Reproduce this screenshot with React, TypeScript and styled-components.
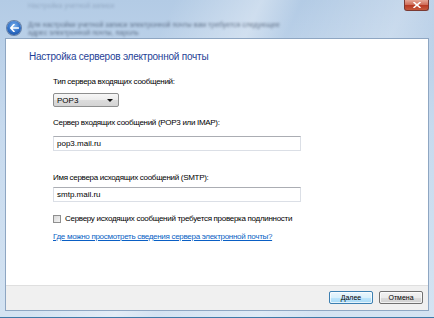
import React from 'react';
import styled, { createGlobalStyle } from 'styled-components';

const GlobalStyle = createGlobalStyle`
  html, body {
    margin: 0;
    padding: 0;
    overflow: hidden;
  }
  body {
    font-family: "Liberation Sans", Arial, sans-serif;
  }
`;

const Window = styled.div`
  position: relative;
  width: 434px;
  height: 318px;
  box-sizing: border-box;
  display: flex;
  flex-direction: column;
  padding: 0 5px 6px 5px;
  background:
    linear-gradient(115deg, rgba(255,255,255,0) 30%, rgba(255,255,255,0.35) 45%, rgba(255,255,255,0) 52%, rgba(255,255,255,0.25) 70%, rgba(255,255,255,0) 80%),
    linear-gradient(180deg, #b3cbe5 0%, #c7daee 40%, #d4e3f2 100%);
  border-bottom: 1px solid #3f7aa8;
  overflow: hidden;
`;

const TitleBar = styled.div`
  height: 38px;
  display: flex;
  align-items: flex-end;
  padding: 0 0 1px 2px;
  box-sizing: border-box;
`;

const BackButton = styled.div`
  width: 14px;
  height: 14px;
  margin-bottom: 2px;
  border-radius: 50%;
  background: radial-gradient(circle at 50% 35%, #7fb4ef 0%, #2f6fc7 55%, #123f8a 100%);
  box-shadow: 0 0 0 1px rgba(20, 50, 100, 0.5);
  display: flex;
  align-items: center;
  justify-content: center;
`;

const GhostColumn = styled.div`
  display: flex;
  flex-direction: column;
  margin-left: 7px;
  filter: blur(1px);
`;

const GhostLine = styled.div<{ $faint?: boolean; $gap?: number }>`
  font-size: 7px;
  line-height: 8px;
  white-space: nowrap;
  color: ${p => (p.$faint ? 'rgba(70, 90, 120, 0.3)' : 'rgba(35, 50, 75, 0.6)')};
  margin-bottom: ${p => p.$gap ?? 0}px;
`;

const CloseButton = styled.div`
  position: absolute;
  top: 0;
  right: 5px;
  width: 25px;
  height: 11px;
  box-sizing: border-box;
  border: 1px solid #7a3a33;
  border-top: none;
  border-radius: 0 0 3px 3px;
  background: linear-gradient(180deg, #e5a696 0%, #d0705c 45%, #b83b25 55%, #c65a3e 100%);
  display: flex;
  align-items: center;
  justify-content: center;
`;

const Content = styled.div`
  flex: 1;
  display: flex;
  flex-direction: column;
  background: #ffffff;
  border: 1px solid #8ea6c2;
`;

const Body = styled.div`
  flex: 1;
  padding: 11px 0 0 23px;
`;

const Heading = styled.div`
  font-size: 10px;
  line-height: 14px;
  letter-spacing: -0.22px;
  color: #1f3f96;
`;

const Form = styled.div`
  display: flex;
  flex-direction: column;
  align-items: flex-start;
  padding-left: 24px;
  letter-spacing: -0.3px;
`;

const Label = styled.div<{ $top: number }>`
  font-size: 8px;
  line-height: 10px;
  color: #000;
  margin-top: ${p => p.$top}px;
  white-space: nowrap;
`;

const Select = styled.div<{ $top: number }>`
  margin-top: ${p => p.$top}px;
  width: 66px;
  height: 14px;
  box-sizing: border-box;
  border: 1px solid #8e8f8f;
  border-radius: 2px;
  background: linear-gradient(180deg, #f7f7f7 0%, #ececec 50%, #dcdcdc 51%, #d4d4d4 100%);
  display: flex;
  align-items: center;
  justify-content: space-between;
  padding: 0 5px 0 3px;
  font-size: 8px;
  letter-spacing: 0;
  color: #000;
`;

const Arrow = styled.span`
  width: 0;
  height: 0;
  border-left: 3px solid transparent;
  border-right: 3px solid transparent;
  border-top: 3px solid #111;
`;

const Input = styled.div<{ $top: number }>`
  margin-top: ${p => p.$top}px;
  width: 248px;
  height: 15px;
  box-sizing: border-box;
  border: 1px solid #dbdfe6;
  border-top-color: #abadb3;
  background: #fff;
  display: flex;
  align-items: center;
  padding-left: 3px;
  font-size: 8px;
  letter-spacing: 0;
  color: #000;
`;

const CheckRow = styled.div<{ $top: number }>`
  margin-top: ${p => p.$top}px;
  display: flex;
  align-items: center;
  gap: 4px;
  font-size: 8px;
  line-height: 10px;
  color: #000;
  white-space: nowrap;
`;

const CheckBox = styled.span`
  width: 8px;
  height: 8px;
  box-sizing: border-box;
  border: 1px solid #8f8f8f;
  background: linear-gradient(135deg, #d8d8d8 0%, #f4f4f4 100%);
`;

const HelpLink = styled.a<{ $top: number }>`
  margin-top: ${p => p.$top}px;
  font-size: 8px;
  line-height: 10px;
  color: #0a5fc4;
  text-decoration: underline;
  white-space: nowrap;
`;

const Footer = styled.div`
  height: 25px;
  box-sizing: border-box;
  background: #f0f0f0;
  border-top: 1px solid #dfdfdf;
  display: flex;
  justify-content: flex-end;
  align-items: flex-start;
  gap: 6px;
  padding: 5px 5px 0 0;
`;

const Button = styled.div<{ $default?: boolean }>`
  width: 44px;
  height: 13px;
  box-sizing: border-box;
  border: 1px solid ${p => (p.$default ? '#3c7fb1' : '#707070')};
  border-radius: 2px;
  background: ${p =>
    p.$default
      ? 'linear-gradient(180deg, #eaf6fd 0%, #d9f0fc 50%, #bee6fd 51%, #a7d9f5 100%)'
      : 'linear-gradient(180deg, #f2f2f2 0%, #ebebeb 50%, #dddddd 51%, #cfcfcf 100%)'};
  box-shadow: inset 0 0 0 1px rgba(255, 255, 255, 0.7);
  display: flex;
  align-items: center;
  justify-content: center;
  font-size: 7px;
  color: #000;
`;

export default function App() {
  return (
    <>
      <GlobalStyle />
      <Window>
        <TitleBar>
          <BackButton>
            <svg width="9" height="8" viewBox="0 0 9 8">
              <path d="M4 0.5 L0.8 4 L4 7.5 M1 4 H8.3" stroke="#fff" strokeWidth="1.6" fill="none" strokeLinecap="round" strokeLinejoin="round" />
            </svg>
          </BackButton>
          <GhostColumn>
            <GhostLine $faint $gap={11}>Настройка учетной записи</GhostLine>
            <GhostLine>Для настройки учетной записи электронной почты вам требуется следующее</GhostLine>
            <GhostLine>адрес электронной почты, пароль</GhostLine>
          </GhostColumn>
        </TitleBar>
        <CloseButton>
          <svg width="8" height="6" viewBox="0 0 8 6">
            <path d="M1 0.5 L7 5.5 M7 0.5 L1 5.5" stroke="#fff" strokeWidth="1.6" strokeLinecap="round" />
          </svg>
        </CloseButton>
        <Content>
          <Body>
            <Heading>Настройка серверов электронной почты</Heading>
            <Form>
              <Label $top={13}>Тип сервера входящих сообщений:</Label>
              <Select $top={6}>
                <span>POP3</span>
                <Arrow />
              </Select>
              <Label $top={11}>Сервер входящих сообщений (POP3 или IMAP):</Label>
              <Input $top={8}>pop3.mail.ru</Input>
              <Label $top={22}>Имя сервера исходящих сообщений (SMTP):</Label>
              <Input $top={4}>smtp.mail.ru</Input>
              <CheckRow $top={12}>
                <CheckBox />
                Серверу исходящих сообщений требуется проверка подлинности
              </CheckRow>
              <HelpLink $top={8}>Где можно просмотреть сведения сервера электронной почты?</HelpLink>
            </Form>
          </Body>
          <Footer>
            <Button $default>Далее</Button>
            <Button>Отмена</Button>
          </Footer>
        </Content>
      </Window>
    </>
  );
}
